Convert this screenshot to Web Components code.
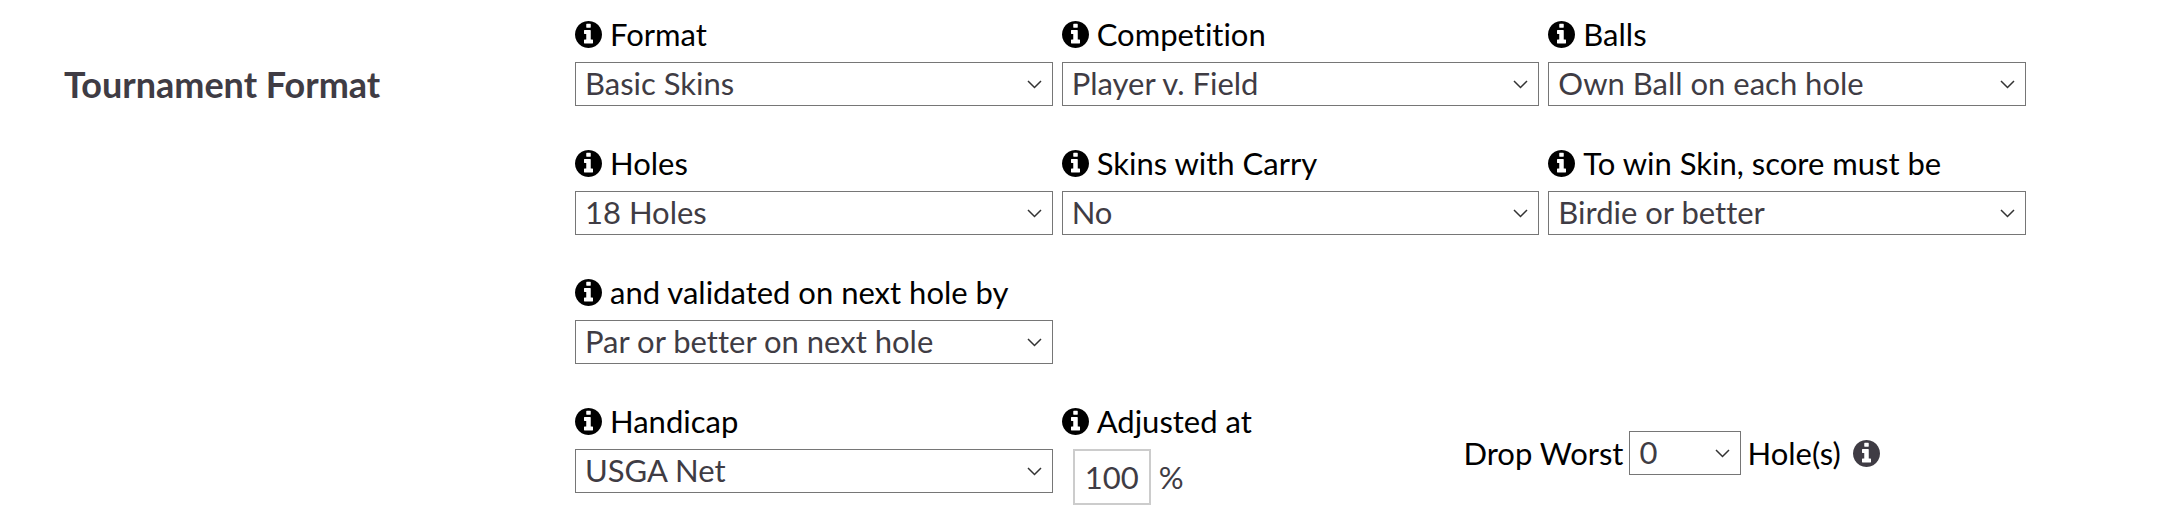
<!DOCTYPE html>
<html lang="en">
<head>
<meta charset="utf-8">
<title>Tournament Format</title>
<style>
  :root {
    --text-label: #000;
    --text-control: #3f3c44;
    --border-select: #767676;
    --border-input: #ccc;
  }

  body {
    margin: 0;
    background: #fff;
    color: var(--text-label);
    font-family: Lato, "Open Sans", sans-serif;
    font-size: 31px;
    font-variant-ligatures: none;
    line-height: 40px;
  }
</style>
</head>
<body>

<settings-section heading="Tournament Format">
  <field-row>
    <select-field label="Format" value="Basic Skins"></select-field>
    <select-field label="Competition" value="Player v. Field"></select-field>
    <select-field label="Balls" value="Own Ball on each hole"></select-field>
  </field-row>
  <field-row>
    <select-field label="Holes" value="18 Holes"></select-field>
    <select-field label="Skins with Carry" value="No"></select-field>
    <select-field label="To win Skin, score must be" value="Birdie or better"></select-field>
  </field-row>
  <field-row>
    <select-field label="and validated on next hole by" value="Par or better on next hole"></select-field>
  </field-row>
  <field-row>
    <select-field label="Handicap" value="USGA Net"></select-field>
    <handicap-options>
      <percent-field label="Adjusted at" value="100"></percent-field>
      <drop-worst value="0"></drop-worst>
    </handicap-options>
  </field-row>
</settings-section>

<script>
/**
 * Small helper: clone markup into an open shadow root
 */
function attach(host, html) {
  const template = document.createElement('template');
  template.innerHTML = html;
  host.attachShadow({ mode: 'open' }).appendChild(template.content.cloneNode(true));
  return host.shadowRoot;
}

// Filled circle with a serif "i" cut out
class InfoIcon extends HTMLElement {
  constructor() {
    super();
    attach(this, `
      <style>
        :host {
          display: block;
          flex: none;
          width: 27px;
          height: 27px;
        }

        svg {
          display: block;
          width: 100%;
          height: 100%;
        }
      </style>
      <svg viewBox="128 128 1536 1536" fill="currentColor" aria-hidden="true">
        <path d="M1152 1376v-160q0-14-9-23t-23-9h-96v-512q0-14-9-23t-23-9h-320q-14 0-23 9t-9 23v160q0 14 9 23t23 9h96v320h-96q-14 0-23 9t-9 23v160q0 14 9 23t23 9h448q14 0 23-9t9-23zm-128-896v-160q0-14-9-23t-23-9h-192q-14 0-23 9t-9 23v160q0 14 9 23t23 9h192q14 0 23-9t9-23zm640 416q0 209-103 385.5t-279.5 279.5-385.5 103-385.5-103-279.5-279.5-103-385.5 103-385.5 279.5-279.5 385.5-103 385.5 103 279.5 279.5 103 385.5z"></path>
      </svg>
    `);
  }
}

// Shared by every element that holds a drop-down
const dropdownStyles = `
  .dropdown {
    display: grid;
    align-items: center;
  }

  .dropdown select,
  .dropdown svg {
    grid-area: 1 / 1;
  }

  .dropdown select {
    appearance: none;
    box-sizing: border-box;
    width: 100%;
    margin: 0;
    padding: 0 40px 2px 9px;
    background: #fff;
    border: 1px solid var(--border-select);
    border-radius: 0;
    color: var(--text-control);
    font: inherit;
  }

  .dropdown svg {
    justify-self: end;
    width: 15px;
    height: 9px;
    margin-right: 11px;
    color: #333;
    pointer-events: none;
  }
`;

const chevron = `
  <svg viewBox="0 0 15 9" fill="none" stroke="currentColor" stroke-width="1.5" aria-hidden="true">
    <path d="M1 1l6.5 6.5L14 1"></path>
  </svg>
`;

class SelectField extends HTMLElement {
  constructor() {
    super();
    const root = attach(this, `
      <style>
        :host {
          display: block;
          min-width: 0;
        }

        label {
          display: flex;
          align-items: center;
          gap: 8px;
          margin-bottom: 8px;
          white-space: nowrap;
        }

        ${dropdownStyles}
      </style>
      <label for="control"><info-icon></info-icon><span class="label"></span></label>
      <div class="dropdown">
        <select id="control"><option></option></select>
        ${chevron}
      </div>
    `);
    this._label = root.querySelector('.label');
    this._option = root.querySelector('option');
  }

  connectedCallback() {
    this._label.textContent = this.getAttribute('label');
    this._option.textContent = this.getAttribute('value');
  }
}

class PercentField extends HTMLElement {
  constructor() {
    super();
    const root = attach(this, `
      <style>
        :host {
          display: block;
        }

        label {
          display: flex;
          align-items: center;
          gap: 8px;
          margin-bottom: 8px;
          white-space: nowrap;
        }

        .value {
          display: flex;
          align-items: center;
          gap: 8px;
          margin-left: 11px;
          color: var(--text-control);
        }

        input {
          box-sizing: border-box;
          width: 78px;
          margin: 0;
          padding: 6px 0;
          background: #fff;
          border: 2px solid var(--border-input);
          border-radius: 0;
          color: inherit;
          font: inherit;
          text-align: center;
        }
      </style>
      <label for="control"><info-icon></info-icon><span class="label"></span></label>
      <div class="value"><input id="control" type="text" inputmode="numeric"><span>%</span></div>
    `);
    this._label = root.querySelector('.label');
    this._input = root.querySelector('input');
  }

  connectedCallback() {
    this._label.textContent = this.getAttribute('label');
    this._input.value = this.getAttribute('value');
  }
}

class DropWorst extends HTMLElement {
  constructor() {
    super();
    const root = attach(this, `
      <style>
        :host {
          display: flex;
          align-items: center;
          gap: 6px;
          white-space: nowrap;
        }

        .dropdown {
          width: 112px;
        }

        info-icon {
          margin-left: 6px;
          color: var(--text-control);
        }

        ${dropdownStyles}
      </style>
      <label for="control">Drop Worst</label>
      <div class="dropdown">
        <select id="control"><option></option></select>
        ${chevron}
      </div>
      <span>Hole(s)</span>
      <info-icon></info-icon>
    `);
    this._option = root.querySelector('option');
  }

  connectedCallback() {
    this._option.textContent = this.getAttribute('value');
  }
}

class HandicapOptions extends HTMLElement {
  constructor() {
    super();
    attach(this, `
      <style>
        :host {
          display: grid;
          grid-template-columns: 5fr 7fr;
          grid-column: span 2;
          align-items: center;
        }
      </style>
      <slot></slot>
    `);
  }
}

class FieldRow extends HTMLElement {
  constructor() {
    super();
    attach(this, `
      <style>
        :host {
          display: grid;
          grid-template-columns: repeat(3, minmax(0, 1fr));
          column-gap: 9px;
          align-items: start;
        }
      </style>
      <slot></slot>
    `);
  }
}

class SettingsSection extends HTMLElement {
  constructor() {
    super();
    const root = attach(this, `
      <style>
        :host {
          display: grid;
          grid-template-columns: 511fr 1451fr;
          padding: 14px 139px 0 64px;
        }

        h2 {
          margin: 50px 0 0;
          color: var(--text-control);
          font-size: 36px;
          line-height: 40px;
          font-weight: 700;
        }

        .rows {
          display: grid;
          row-gap: 37px;
        }
      </style>
      <h2></h2>
      <div class="rows"><slot></slot></div>
    `);
    this._heading = root.querySelector('h2');
  }

  connectedCallback() {
    this._heading.textContent = this.getAttribute('heading');
  }
}

customElements.define('info-icon', InfoIcon);
customElements.define('select-field', SelectField);
customElements.define('percent-field', PercentField);
customElements.define('drop-worst', DropWorst);
customElements.define('handicap-options', HandicapOptions);
customElements.define('field-row', FieldRow);
customElements.define('settings-section', SettingsSection);
</script>
</body>
</html>
